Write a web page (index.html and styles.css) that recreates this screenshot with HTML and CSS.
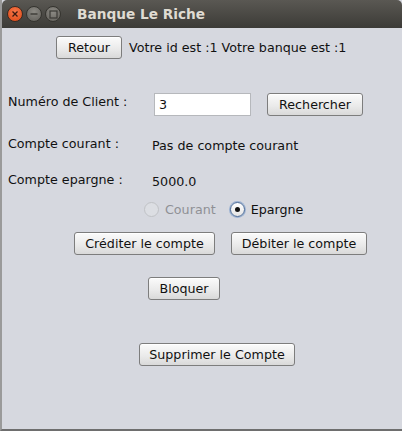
FILE: index.html
```html
<!DOCTYPE html>
<html>
<head>
<meta charset="utf-8">
<link rel="stylesheet" href="styles.css">
</head>
<body>
<div class="window">
  <div class="titlebar">
    <div class="controls">
      <span class="ctl close"><svg width="8" height="8" viewBox="0 0 8 8"><path d="M1.5 1.5 L6.5 6.5 M6.5 1.5 L1.5 6.5" stroke="#3a1a10" stroke-width="1.3"/></svg></span>
      <span class="ctl"><svg width="8" height="8" viewBox="0 0 8 8"><path d="M0.5 4 H7.5" stroke="#3b3a36" stroke-width="1.4"/></svg></span>
      <span class="ctl"><svg width="9" height="9" viewBox="0 0 9 9"><rect x="1" y="1" width="7" height="7" fill="none" stroke="#3b3a36" stroke-width="1.2"/></svg></span>
    </div>
    <div class="title">Banque Le Riche</div>
  </div>
  <div class="content">
    <div class="row r1">
      <button class="btn b-retour">Retour</button>
      <span class="txt info">Votre id est :1 Votre banque est :1</span>
    </div>
    <div class="row r2">
      <span class="txt lbl">Numéro de Client :</span>
      <div class="input">3</div>
      <button class="btn b-rech">Rechercher</button>
    </div>
    <div class="row r3">
      <span class="txt lbl">Compte courant :</span>
      <span class="txt val">Pas de compte courant</span>
    </div>
    <div class="row r4">
      <span class="txt lbl">Compte epargne :</span>
      <span class="txt val">5000.0</span>
    </div>
    <div class="row r5">
      <span class="radio disabled"><span class="dot"></span><span class="txt">Courant</span></span>
      <span class="radio checked"><span class="dot"></span><span class="txt">Epargne</span></span>
    </div>
    <div class="row r6">
      <button class="btn b-cred">Créditer le compte</button>
      <button class="btn b-deb">Débiter le compte</button>
    </div>
    <div class="row r7">
      <button class="btn b-bloq">Bloquer</button>
    </div>
    <div class="row r8">
      <button class="btn b-supp">Supprimer le Compte</button>
    </div>
  </div>
</div>
</body>
</html>
```
FILE: styles.css
```css
* { box-sizing: border-box; }
html, body { margin: 0; padding: 0; background: #5a5a5a; }
.window {
  width: 402px;
  height: 431px;
  background: #d6d8df;
  border-left: 2px solid #9a9a9a;
  border-bottom: 2px solid #6e6e6e;
  overflow: hidden;
  font-family: "DejaVu Sans", Verdana, sans-serif;
  font-size: 12.7px;
  color: #111;
}
.titlebar {
  height: 28px;
  background: linear-gradient(#5a5853, #3c3b37);
  border-radius: 5px 5px 0 0;
  display: flex;
  align-items: center;
  padding-left: 5px;
}
.controls { display: flex; gap: 3px; }
.ctl {
  width: 16px; height: 16px; border-radius: 50%;
  background: radial-gradient(circle at 50% 35%, #8c8a84, #5f5d58);
  border: 1px solid #35342f;
  display: flex; align-items: center; justify-content: center;
}
.ctl.close { background: radial-gradient(circle at 50% 35%, #f7774a, #dd4814); border-color: #3a2a22; }
.title {
  margin-left: 16px;
  color: #dfdbd2;
  font-weight: bold;
  font-size: 13.7px;
  font-family: "DejaVu Sans", sans-serif;
}
.row { display: flex; align-items: flex-start; }
.txt { white-space: nowrap; line-height: 14px; }
.btn {
  font-family: "DejaVu Sans", Verdana, sans-serif;
  font-size: 12.7px;
  color: #111;
  height: 23px;
  padding: 0;
  border: 1px solid #7d7d7d;
  border-radius: 3px;
  background: linear-gradient(#fbfbfb, #e9e9e9 60%, #d9d9d9);
  box-shadow: inset 0 1px 0 #fff;
  white-space: nowrap;
}
.r1 { margin-top: 8px; padding-left: 54px; }
.b-retour { width: 66px; }
.info { margin-left: 7px; margin-top: 5px; }
.r2 { margin-top: 34px; padding-left: 6px; height: 23px; }
.lbl { width: 146px; margin-top: 2px; }
.input {
  width: 97px; height: 23px;
  background: #fff;
  border: 1px solid #b6b8bc;
  padding: 4px 0 0 4px;
  line-height: 14px;
}
.b-rech { margin-left: 16px; width: 96px; }
.r3 { margin-top: 19px; padding-left: 6px; }
.val { margin-top: 4px; margin-left: -2px; }
.r4 { margin-top: 18px; padding-left: 6px; }
.r5 { margin-top: 13px; padding-left: 142px; }
.radio { display: flex; align-items: center; }
.radio .dot {
  width: 15px; height: 15px; border-radius: 50%;
  border: 1px solid #7a7d84;
  background: linear-gradient(#fff, #e4e4e4);
  margin-right: 6px;
  position: relative;
}
.radio.disabled .dot { border-color: #c0c2c6; background: #dcdee3; }
.radio.disabled .txt { color: #8f9095; }
.radio.checked { margin-left: 14px; }
.radio.checked .dot { border-color: #4b6b98; box-shadow: 0 0 0 1px #9ab1d2; }
.radio.checked .dot::after {
  content: ""; position: absolute; left: 4px; top: 4px;
  width: 5px; height: 5px; border-radius: 50%; background: #111;
}
.r6 { margin-top: 15px; padding-left: 72px; gap: 16px; }
.b-cred { width: 141px; }
.b-deb { width: 136px; }
.r7 { margin-top: 22px; padding-left: 146px; }
.b-bloq { width: 72px; }
.r8 { margin-top: 43px; padding-left: 137px; }
.b-supp { width: 156px; }
```
